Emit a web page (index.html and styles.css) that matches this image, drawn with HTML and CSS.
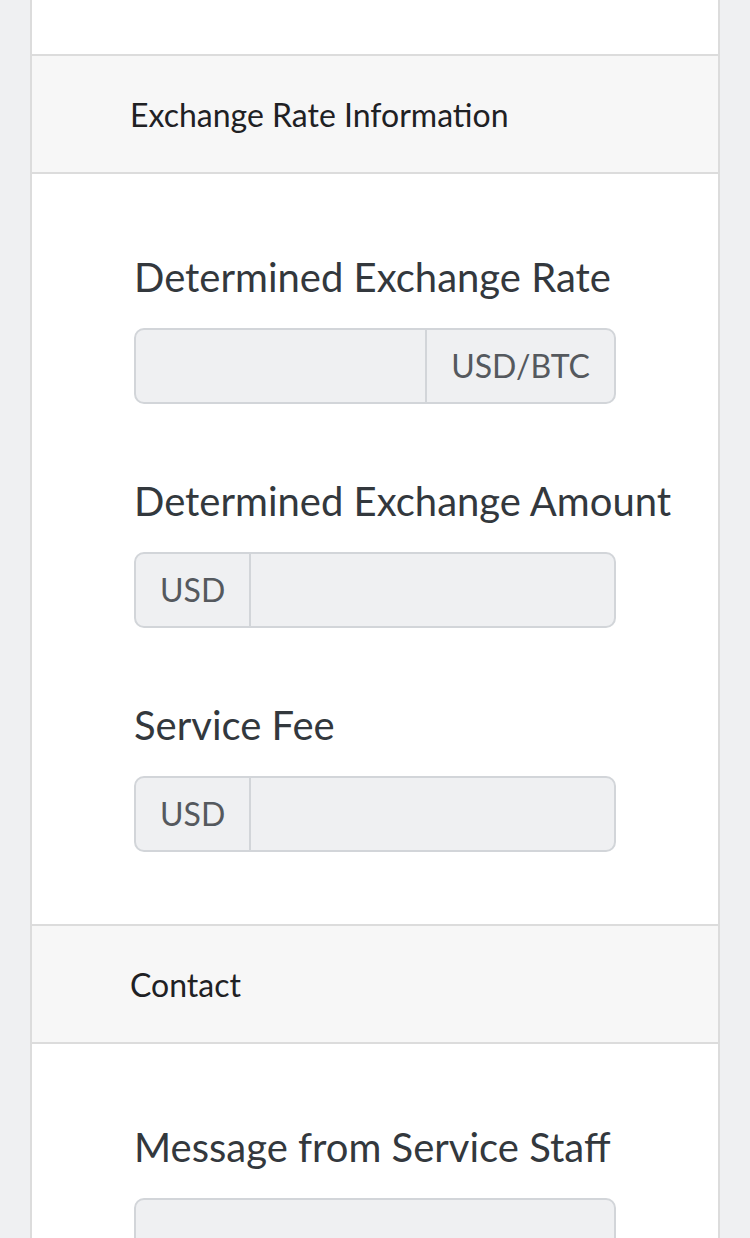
FILE: index.html
```html
<!DOCTYPE html>
<html lang="en">
<head>
<meta charset="utf-8">
<title>Exchange</title>
<link rel="stylesheet" href="styles.css">
</head>
<body>
<div class="page">
  <div class="card">
    <div class="section-tail"></div>
    <div class="section-head">Exchange Rate Information</div>
    <div class="section-body">
      <div class="group">
        <label class="label">Determined Exchange Rate</label>
        <div class="input-group">
          <div class="input"></div>
          <div class="addon addon-right">USD/BTC</div>
        </div>
      </div>
      <div class="group">
        <label class="label">Determined Exchange Amount</label>
        <div class="input-group">
          <div class="addon addon-left">USD</div>
          <div class="input"></div>
        </div>
      </div>
      <div class="group">
        <label class="label">Service Fee</label>
        <div class="input-group">
          <div class="addon addon-left">USD</div>
          <div class="input"></div>
        </div>
      </div>
    </div>
    <div class="section-head">Contact</div>
    <div class="section-body">
      <div class="group">
        <label class="label">Message from Service Staff</label>
        <div class="input-group textarea">
          <div class="input"></div>
        </div>
      </div>
    </div>
  </div>
</div>
</body>
</html>
```
FILE: styles.css
```css
html, body {
  margin: 0;
  padding: 0;
  background: #eff0f2;
  font-family: Lato, "Open Sans", "Liberation Sans", sans-serif;
}
.page {
  padding-left: 30px;
  width: 690px;
  height: 1238px;
  overflow: hidden;
}
.card {
  background: #ffffff;
  border-left: 2px solid #dcdcdc;
  border-right: 2px solid #dcdcdc;
  min-height: 1238px;
}
.section-tail {
  height: 54px;
}
.section-head {
  background: #f7f7f7;
  border-top: 2px solid #dcdcdc;
  border-bottom: 2px solid #dcdcdc;
  height: 114px;
  padding-top: 2px;
  line-height: 114px;
  font-size: 32px;
  color: #1f2124;
  padding-left: 98px;
}
.section-body {
  padding: 78px 0 0 102px;
}
.group {
  margin-bottom: 72px;
}
.label {
  display: block;
  font-size: 40px;
  line-height: 48px;
  padding-top: 1px;
  color: #33383d;
  margin-bottom: 27px;
}
.input-group {
  display: flex;
  width: 482px;
  height: 76px;
  box-sizing: border-box;
  border: 2px solid #d2d5d9;
  border-radius: 10px;
  background: #eff0f2;
  overflow: hidden;
}
.input {
  flex: 1;
}
.addon {
  display: flex;
  align-items: center;
  padding: 0 24px 1px;
  font-size: 32px;
  color: #55595e;
}
.addon-right {
  border-left: 2px solid #d2d5d9;
}
.addon-left {
  border-right: 2px solid #d2d5d9;
}
.textarea {
  height: 120px;
}
```
